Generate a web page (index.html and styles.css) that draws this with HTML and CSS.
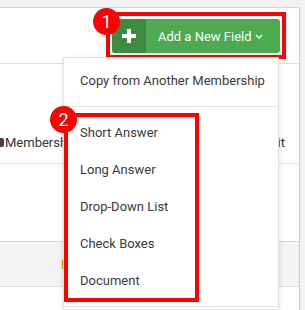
FILE: index.html
```html
<!DOCTYPE html>
<html lang="en">
<head>
    <meta charset="UTF-8">
    <title>Add a New Field</title>
    <link rel="stylesheet" href="styles.css">
</head>
<body>

    <div class="panel">
        <div class="toolbar">
            <button class="add-button">
                <span class="add-icon">
                    <svg width="14" height="14" viewBox="0 0 14 14"><path d="M7 0v14M0 7h14" stroke="#fff" stroke-width="4"/></svg>
                </span>
                <span class="add-label">Add a New Field</span>
                <svg class="chevron" width="8" height="5" viewBox="0 0 8 5"><path d="M1 1l3 3 3-3" fill="none" stroke="#fff" stroke-width="1.5"/></svg>
            </button>
            <span class="badge badge-1">1</span>
        </div>

        <div class="list-head">
            <span class="head-cell"><i class="head-icon"></i>Membership</span>
            <span class="head-cell">Edit</span>
        </div>

        <div class="spacer"></div>

        <div class="band">
            <span class="band-link">Edit</span>
        </div>

        <!-- dropdown menu over the page -->
        <div class="menu">
            <div class="menu-item">Copy from Another Membership</div>
            <div class="menu-divider"></div>
            <div class="menu-item">Short Answer</div>
            <div class="menu-item">Long Answer</div>
            <div class="menu-item">Drop-Down List</div>
            <div class="menu-item">Check Boxes</div>
            <div class="menu-item">Document</div>
            <div class="menu-divider"></div>
            <div class="highlight"></div>
        </div>
        <span class="badge badge-2">2</span>
    </div>

</body>
</html>
```

FILE: styles.css
```css
body {
    margin: 0;
    background-color: #f2f2f2;
    font-family: Roboto, "Liberation Sans", sans-serif;
    font-size: 13px;
    color: #333;
    overflow: hidden;
}

/* main white panel */
.panel {
    position: relative;
    margin-top: 7px;
    width: 299px;
    height: 302px;
    background-color: #fff;
    border-top: 1px solid #d6d6d6;
    border-right: 1px solid #c8c8c8;
}

.toolbar {
    position: relative;
    height: 55px;
    border-bottom: 1px solid #dedede;
    display: flex;
    justify-content: flex-end;
    align-items: flex-start;
    padding-right: 19px;
}

.add-button {
    position: relative;
    margin-top: 11px;
    display: flex;
    align-items: center;
    width: 168px;
    height: 34px;
    padding: 0;
    border: none;
    border-radius: 3px;
    background-color: #4caa50;
    color: #fff;
    font-family: Roboto, "Liberation Sans", sans-serif;
    font-size: 13px;
}

/* red annotation frame */
.add-button::after {
    content: '';
    position: absolute;
    left: -6px;
    right: -6px;
    top: -7px;
    bottom: -6px;
    border: 4px solid #ff0000;
}

.add-icon {
    width: 34px;
    height: 34px;
    display: flex;
    align-items: center;
    justify-content: center;
    background-color: #3d8b40;
    border-radius: 3px 0 0 3px;
}

.add-label {
    margin-left: 12px;
    flex: 1;
    text-align: left;
}

.chevron {
    margin-right: 17px;
}

.badge {
    position: absolute;
    width: 27px;
    height: 27px;
    border-radius: 50%;
    background-color: #f00;
    color: #fff;
    font-size: 18px;
    line-height: 27px;
    text-align: center;
    z-index: 20;
}

.badge-1 { left: 93px; top: 0; }
.badge-2 { left: 50px; top: 98px; }

/* content behind the menu */
.list-head {
    height: 100px;
    border-bottom: 1px solid #e3e3e3;
    display: flex;
    justify-content: space-between;
    align-items: flex-end;
    padding-right: 14px;
    box-sizing: border-box;
    padding-bottom: 13px;
}

.head-cell {
    display: flex;
    align-items: center;
}

.head-icon {
    width: 4px;
    height: 9px;
    margin-right: 1px;
    border-radius: 0 2px 2px 0;
    background-color: #444;
}

.spacer {
    height: 77px;
}

.band {
    height: 44px;
    background-color: #f4f4f4;
    border-top: 1px solid #d8d8d8;
    border-bottom: 1px solid #e0e0e0;
    display: flex;
    align-items: center;
    padding-left: 61px;
}

.band-link {
    color: #e08a00;
}

/* dropdown */
.menu {
    position: absolute;
    left: 63px;
    top: 49px;
    width: 214px;
    height: 247px;
    padding-top: 4px;
    background-color: #fff;
    border: 1px solid #e2e2e2;
    border-bottom: none;
    box-shadow: 0 2px 6px rgba(0, 0, 0, 0.12);
    z-index: 10;
}

.menu-item {
    height: 37px;
    line-height: 37px;
    padding-left: 16px;
    color: #3a3a3a;
}

.menu-divider {
    height: 1px;
    margin: 7px 0;
    background-color: #e4e4e4;
}

.highlight {
    position: absolute;
    left: 0;
    top: 55px;
    width: 127px;
    height: 181px;
    border: 4px solid #ff0000;
}
```
